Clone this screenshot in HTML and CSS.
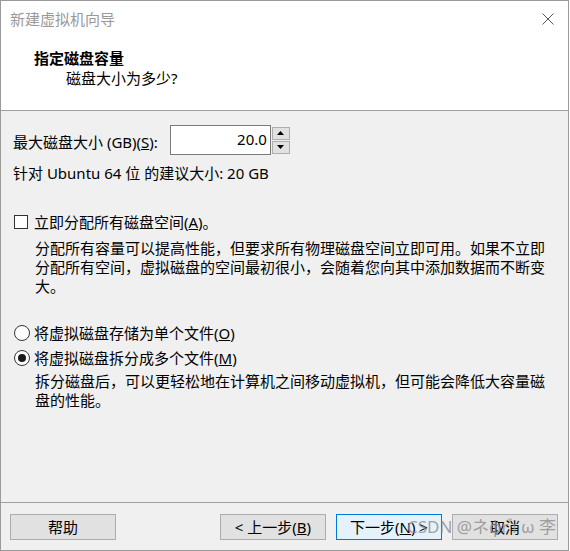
FILE: index.html
```html
<!DOCTYPE html>
<html lang="zh">
<head>
<meta charset="utf-8">
<title>新建虚拟机向导</title>
<link rel="stylesheet" href="styles.css">
</head>
<body>
<div class="window">
  <div class="titlebar">
    <span class="title">新建虚拟机向导</span>
    <svg class="close" width="12" height="12" viewBox="0 0 12 12"><path d="M0.5 0.5L11.5 11.5M11.5 0.5L0.5 11.5" stroke="#555" stroke-width="1" fill="none"/></svg>
  </div>
  <div class="header">
    <div class="h-title">指定磁盘容量</div>
    <div class="h-sub">磁盘大小为多少?</div>
  </div>
  <div class="sep"></div>
  <div class="content">
    <div class="size-row">
      <span class="label">最大磁盘大小 (GB)(<u>S</u>):</span>
      <div class="spinner">
        <div class="spin-input">20.0</div>
        <div class="spin-btns">
          <div class="spin-btn"><svg width="7" height="4" viewBox="0 0 7 4"><path d="M3.5 0L7 4H0Z" fill="#000"/></svg></div>
          <div class="spin-btn"><svg width="7" height="4" viewBox="0 0 7 4"><path d="M0 0H7L3.5 4Z" fill="#000"/></svg></div>
        </div>
      </div>
    </div>
    <div class="recommend">针对 Ubuntu 64 位 的建议大小: 20 GB</div>
    <div class="check-row">
      <span class="checkbox"></span>
      <span>立即分配所有磁盘空间(<u>A</u>)。</span>
    </div>
    <div class="desc">分配所有容量可以提高性能，但要求所有物理磁盘空间立即可用。如果不立即分配所有空间，虚拟磁盘的空间最初很小，会随着您向其中添加数据而不断变大。</div>
    <div class="radio-row first">
      <span class="radio"></span>
      <span>将虚拟磁盘存储为单个文件(<u>O</u>)</span>
    </div>
    <div class="radio-row">
      <span class="radio checked"></span>
      <span>将虚拟磁盘拆分成多个文件(<u>M</u>)</span>
    </div>
    <div class="desc desc2">拆分磁盘后，可以更轻松地在计算机之间移动虚拟机，但可能会降低大容量磁盘的性能。</div>
  </div>
  <div class="sep"></div>
  <div class="footer">
    <button class="btn">帮助</button>
    <div class="spacer"></div>
    <button class="btn">&lt; 上一步(<u>B</u>)</button>
    <button class="btn default">下一步(<u>N</u>) &gt;</button>
    <button class="btn">取消</button>
    <span class="watermark">CSDN @ネφr ゙ı ω 李</span>
  </div>
</div>
</body>
</html>
```
FILE: styles.css
```css
html, body {
  margin: 0;
  padding: 0;
  background: #ffffff;
}
body {
  width: 570px;
  height: 551px;
  overflow: hidden;
  font-family: "Noto Sans", "Noto Sans CJK SC", sans-serif;
  font-size: 15px;
  color: #000;
}
.window {
  width: 569px;
  height: 551px;
  box-sizing: border-box;
  border: 1px solid #9a9a9a;
  display: flex;
  flex-direction: column;
  background: #f0f0f0;
  position: relative;
}
.titlebar {
  height: 38px;
  background: #fff;
  display: flex;
  align-items: center;
  justify-content: space-between;
  padding: 0 14px 2px 9px;
  box-sizing: border-box;
}
.title {
  color: #999;
  line-height: 20px;
}
.close {
  display: block;
}
.header {
  height: 71px;
  background: #fff;
  padding-top: 9px;
  box-sizing: border-box;
}
.h-title {
  font-weight: bold;
  padding-left: 33px;
  line-height: 20px;
}
.h-sub {
  padding-left: 65px;
  line-height: 20px;
}
.sep {
  height: 1px;
  background: #a0a0a0;
  flex: none;
}
.content {
  flex: 1;
  padding: 14px 0 0 12px;
  box-sizing: border-box;
}
.size-row {
  display: flex;
  align-items: center;
  gap: 12px;
  height: 30px;
}
.label {
  line-height: 20px;
  padding-top: 3px;
}
.spinner {
  display: flex;
  height: 30px;
  gap: 1px;
}
.spin-input {
  width: 101px;
  height: 30px;
  box-sizing: border-box;
  border: 1px solid #7a7a7a;
  background: #fff;
  text-align: right;
  padding: 0 3px 0 0;
  line-height: 26px;
}
.spin-btns {
  display: flex;
  flex-direction: column;
  justify-content: center;
  gap: 1px;
  width: 18px;
}
.spin-btn {
  height: 13px;
  box-sizing: border-box;
  border: 1px solid #adadad;
  background: #e1e1e1;
  display: flex;
  align-items: center;
  justify-content: center;
}
.spin-btn svg {
  display: block;
}
.recommend {
  line-height: 20px;
  margin-top: 8px;
}
.check-row {
  display: flex;
  align-items: center;
  gap: 6px;
  line-height: 20px;
  margin-top: 29px;
}
.checkbox {
  width: 14px;
  height: 14px;
  box-sizing: border-box;
  border: 1px solid #333;
  background: #fff;
  margin-left: 1px;
}
.desc {
  margin: 7px 0 0 22px;
  width: 516px;
  line-height: 19px;
  line-break: strict;
}
.radio-row {
  display: flex;
  align-items: center;
  gap: 4px;
  line-height: 20px;
  margin-top: 5px;
}
.radio-row.first {
  margin-top: 27px;
}
.radio {
  width: 16px;
  height: 16px;
  box-sizing: border-box;
  border: 1px solid #333;
  border-radius: 50%;
  background: #fff;
  margin-left: 1px;
  display: flex;
  align-items: center;
  justify-content: center;
}
.radio.checked::after {
  content: "";
  width: 8px;
  height: 8px;
  border-radius: 50%;
  background: #1a1a1a;
}
.desc2 {
  margin-top: 4px;
}
.footer {
  height: 47px;
  flex: none;
  display: flex;
  align-items: flex-start;
  gap: 10px;
  padding: 11px 10px 0 9px;
  box-sizing: border-box;
  position: relative;
}
.spacer {
  flex: 1;
}
.btn {
  width: 106px;
  height: 26px;
  box-sizing: border-box;
  border: 1px solid #adadad;
  background: #e1e1e1;
  font-family: inherit;
  font-size: 15px;
  color: #000;
  padding: 0;
  line-height: 22px;
}
.btn.default {
  border-color: #0078d7;
  background: #e5f1fb;
}
.watermark {
  position: absolute;
  left: 406px;
  top: 12px;
  font-size: 17px;
  line-height: 24px;
  color: rgba(140, 140, 140, 0.8);
  white-space: nowrap;
  pointer-events: none;
}
```
